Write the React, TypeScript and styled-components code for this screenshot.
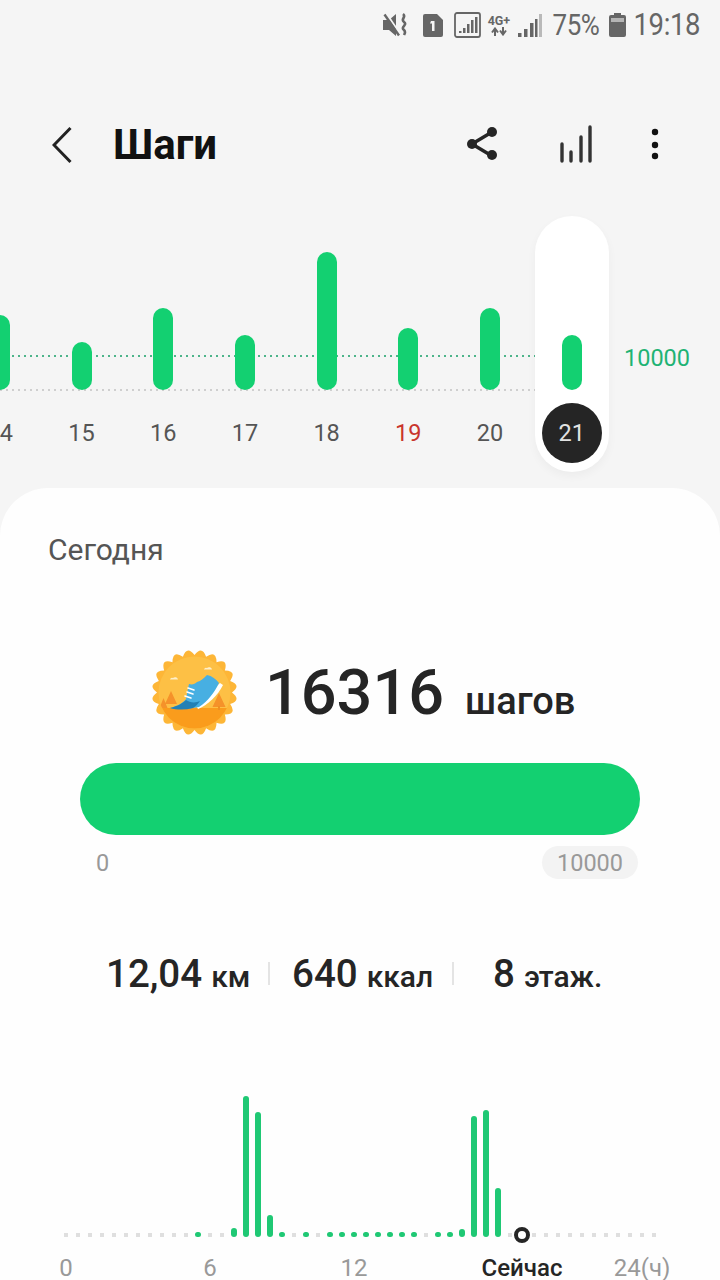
import React from 'react';
import styled, { createGlobalStyle } from 'styled-components';

const GlobalStyle = createGlobalStyle`
  html, body {
    margin: 0;
    padding: 0;
    background: #f5f5f5;
    font-family: Roboto, "Noto Sans", sans-serif;
  }
`;

const Page = styled.div`
  width: 720px;
  height: 1280px;
  overflow: hidden;
  background: #f5f5f5;
`;

const StatusBar = styled.div`
  height: 50px;
  display: flex;
  align-items: center;
  justify-content: flex-end;
  padding-right: 20px;
  color: #666;
  box-sizing: border-box;
`;

const StatusIcon = styled.svg<{ $ml?: number }>`
  display: block;
  margin-left: ${(p) => p.$ml ?? 0}px;
  flex: none;
`;

const StatusText = styled.span<{ $ml: number; $size: number }>`
  margin-left: ${(p) => p.$ml}px;
  font-size: ${(p) => p.$size}px;
  line-height: 30px;
  letter-spacing: -0.4px;
  transform: scaleY(1.12);
`;

const NetworkTag = styled.div`
  margin-left: 5px;
  width: 25px;
  display: flex;
  flex-direction: column;
  align-items: center;
  color: #666;
`;

const NetworkLabel = styled.span`
  font-size: 12.5px;
  line-height: 13px;
  font-weight: 700;
  white-space: nowrap;
`;

const Header = styled.div`
  height: 166px;
  box-sizing: border-box;
  padding: 70px 0 0 52px;
  display: flex;
  align-items: flex-start;
`;

const BackIcon = styled.svg`
  display: block;
  flex: none;
  margin-top: 6px;
`;

const Title = styled.h1`
  margin: 0 0 0 41px;
  font-size: 42px;
  line-height: 50px;
  font-weight: 700;
  color: #111;
  flex: 1;
`;

const HeaderIcon = styled.svg<{ $mr: number }>`
  display: block;
  flex: none;
  margin-right: ${(p) => p.$mr}px;
`;

const WeekChart = styled.div`
  position: relative;
  height: 272px;
`;

const GuideLine = styled.div<{ $top: number; $color: string }>`
  position: absolute;
  left: 0;
  width: 540px;
  top: ${(p) => p.$top}px;
  height: 2px;
  background: repeating-linear-gradient(
    90deg,
    ${(p) => p.$color} 0 2px,
    transparent 2px 6px
  );
`;

const GoalLabel = styled.span`
  position: absolute;
  left: 624px;
  top: 127px;
  font-size: 23.5px;
  line-height: 30px;
  color: #1fb374;
`;

const DayRow = styled.div`
  position: relative;
  display: flex;
  margin-left: -41px;
`;

const DayColumn = styled.div<{ $selected?: boolean }>`
  position: relative;
  width: 81.7px;
  flex: none;
  display: flex;
  flex-direction: column;
  align-items: center;

  ${(p) =>
    p.$selected &&
    `
    &::before {
      content: '';
      position: absolute;
      top: 0;
      left: 3.85px;
      width: 74px;
      height: 256px;
      border-radius: 37px;
      background: #fff;
      box-shadow: 0 4px 10px rgba(0, 0, 0, 0.04);
    }
  `}
`;

const BarSlot = styled.div`
  position: relative;
  height: 174px;
  display: flex;
  align-items: flex-end;
`;

const DayBar = styled.div<{ $height: number }>`
  width: 20px;
  height: ${(p) => p.$height}px;
  border-radius: 10px;
  background: #13d071;
`;

const DayLabel = styled.div<{ $tone?: 'red' | 'selected' }>`
  position: relative;
  margin-top: 13px;
  width: 60px;
  height: 60px;
  border-radius: 50%;
  display: flex;
  align-items: center;
  justify-content: center;
  font-size: 23.5px;
  color: ${(p) => (p.$tone === 'red' ? '#c9352d' : p.$tone === 'selected' ? '#e2e2e2' : '#555')};
  background: ${(p) => (p.$tone === 'selected' ? '#252525' : 'transparent')};
`;

const Card = styled.div`
  height: 792px;
  background: #fefefe;
  border-radius: 48px 48px 0 0;
  padding-top: 47px;
  box-sizing: border-box;
`;

const TodayTitle = styled.div`
  padding-left: 48px;
  font-size: 30px;
  line-height: 30px;
  color: #555;
  font-weight: 400;
`;

const Summary = styled.div`
  margin-top: 85px;
  height: 85px;
  padding-left: 152px;
  display: flex;
  align-items: center;
`;

const Badge = styled.svg`
  display: block;
  flex: none;
`;

const StepsText = styled.div`
  margin-left: 28px;
  display: flex;
  align-items: baseline;
  color: #252525;
  font-weight: 500;
`;

const StepsValue = styled.span`
  font-size: 63px;
  line-height: 70px;
`;

const StepsUnit = styled.span`
  margin-left: 21px;
  font-size: 38px;
`;

const Progress = styled.div`
  margin: 28px 80px 0;
  height: 72px;
  border-radius: 36px;
  background: #13d071;
`;

const RangeRow = styled.div`
  margin-top: 11px;
  height: 33px;
  padding: 0 82px 0 96px;
  display: flex;
  align-items: center;
  justify-content: space-between;
  font-size: 23.5px;
  color: #999;
`;

const GoalPill = styled.span`
  width: 96px;
  height: 33px;
  border-radius: 17px;
  background: #f3f3f3;
  display: flex;
  align-items: center;
  justify-content: center;
`;

const StatsRow = styled.div`
  margin-top: 69px;
  height: 50px;
  padding-left: 106px;
  display: flex;
  align-items: center;
`;

const Stat = styled.div<{ $width: number; $ml?: number }>`
  width: ${(p) => p.$width}px;
  margin-left: ${(p) => p.$ml ?? 0}px;
  display: flex;
  align-items: baseline;
  gap: 9px;
  color: #252525;
  font-weight: 500;
  white-space: nowrap;
`;

const StatValue = styled.span`
  font-size: 38.5px;
`;

const StatUnit = styled.span`
  font-size: 30px;
`;

const StatDivider = styled.div`
  width: 2px;
  height: 23px;
  background: #e4e4e4;
`;

const HourGrid = styled.div`
  margin: 98px 0 0 60px;
  display: grid;
  grid-template-columns: repeat(50, 12px);
  height: 141px;
  align-items: end;
  justify-items: center;
`;

const HourMark = styled.div<{ $height: number; $empty?: boolean }>`
  width: ${(p) => (p.$empty ? 4 : 6)}px;
  height: ${(p) => p.$height}px;
  border-radius: ${(p) => (p.$empty ? 0 : 3)}px;
  background: ${(p) => (p.$empty ? '#dfdfdf' : '#1fc874')};
`;

const NowMarker = styled.div`
  width: 16px;
  height: 16px;
  box-sizing: border-box;
  border: 4px solid #252525;
  border-radius: 50%;
  background: #fff;
  margin-bottom: -6px;
`;

const AxisRow = styled.div`
  margin: 19px 0 0 24px;
  display: grid;
  grid-template-columns: repeat(56, 12px);
`;

const AxisLabel = styled.span<{ $slot: number; $strong?: boolean }>`
  grid-column: ${(p) => p.$slot + 1} / span 7;
  grid-row: 1;
  text-align: center;
  white-space: nowrap;
  font-size: 24px;
  line-height: 24px;
  font-weight: ${(p) => (p.$strong ? 500 : 400)};
  color: ${(p) => (p.$strong ? '#252525' : '#999')};
`;

const days = [
  { day: '14', height: 75 },
  { day: '15', height: 48 },
  { day: '16', height: 82 },
  { day: '17', height: 55 },
  { day: '18', height: 138 },
  { day: '19', height: 62, tone: 'red' as const },
  { day: '20', height: 82 },
  { day: '21', height: 55, tone: 'selected' as const },
];

const hourBars: Record<number, number> = { 14: 9, 15: 141, 16: 125, 17: 22, 33: 8, 34: 121, 35: 127, 36: 49 };
const hourDots = [11, 18, 20, 22, 23, 24, 25, 26, 27, 28, 29, 31, 32];
const NOW_SLOT = 38;

// scalloped edge of the badge
const badgeEdge = () => {
  const count = 20;
  const c = 42.5;
  const inner = 37.5;
  const outer = 48;
  let d = '';
  for (let i = 0; i < count; i++) {
    const a0 = (i / count) * Math.PI * 2;
    const a1 = ((i + 0.5) / count) * Math.PI * 2;
    const a2 = ((i + 1) / count) * Math.PI * 2;
    if (i === 0) d += `M${c + inner * Math.cos(a0)} ${c + inner * Math.sin(a0)}`;
    d += `Q${c + outer * Math.cos(a1)} ${c + outer * Math.sin(a1)} ${c + inner * Math.cos(a2)} ${c + inner * Math.sin(a2)}`;
  }
  return d + 'Z';
};

const StepsBadge = () => (
  <Badge width="85" height="85" viewBox="0 0 85 85">
    <defs>
      <clipPath id="badge-inner">
        <circle cx="42.5" cy="42.5" r="36" />
      </clipPath>
    </defs>
    <path d={badgeEdge()} fill="#fdb637" />
    <circle cx="42.5" cy="42.5" r="36" fill="#fdc045" />
    <g clipPath="url(#badge-inner)">
      <rect x="0" y="58" width="85" height="30" fill="#fa9c1c" />
      <path d="M19 41l-6 13h12zM11.500 48l-4 10h8zM67 43l-6.500 14h13z" fill="#f5922a" />
      <rect x="66" y="56" width="2" height="4" fill="#ef8f22" />
    </g>
    <path d="M18 29.500a2 2 0 0 1 3-1.500a3 3 0 0 1 5 1.500zM52 19.500a2 2 0 0 1 3-1.500a3 3 0 0 1 5 1.500z" fill="#feeec8" />
    <path d="M46 59c10-4 20-14 25-24l-3-2-24 22z" fill="#fff" />
    <path d="M18 58c8-2 13-5 16-9 1-5 2-11 3-15 3 1 6 0 8-2 4-1 7-4 10-7 5 1 9 4 12 8-5 10-11 18-20 24-10 2-20 3-29 1z" fill="#47afe2" />
    <path d="M18 58c8-2 13-5 16-8 4 3 10 3 14 1-2 3-4 5-7 7-8 2-16 2-23 0z" fill="#2380b4" />
    <path d="M36 38l6 2M35 42l6 2M33 46l6 2" stroke="#fff" strokeWidth="1.600" strokeLinecap="round" />
  </Badge>
);

export default function App() {
  return (
    <Page>
      <GlobalStyle />
      <StatusBar>
        <StatusIcon width="26" height="24" viewBox="0 0 26 24">
          <path d="M0 7h6l7-6v22l-7-6H0z" fill="#666" />
          <path d="M3 0l15 22" stroke="#f5f5f5" strokeWidth="2" />
          <path d="M1.500 1.500l14.500 21" stroke="#666" strokeWidth="2.400" />
          <path d="M20 1c4 3-3 5 1 8s-4 5 0 8c2 2 1 3 0 5" fill="none" stroke="#666" strokeWidth="2.600" />
        </StatusIcon>
        <StatusIcon $ml={13} width="21" height="23" viewBox="0 0 21 23">
          <path d="M3 0h12l6 6v15a2 2 0 0 1-2 2H3a2 2 0 0 1-2-2V2a2 2 0 0 1 2-2z" fill="#666" />
          <path d="M9 7h3.500v10H10V9.500H8z" fill="#f5f5f5" />
        </StatusIcon>
        <StatusIcon $ml={11} width="27" height="26" viewBox="0 0 27 26">
          <rect x="1" y="1" width="25" height="24" rx="2" fill="none" stroke="#666" strokeWidth="1.800" />
          <path d="M5 19h2.500v2H5zM9 16h2.500v5H9zM13 12h2.500v9H13zM17 8h2.500v13H17zM21 5h2.500v16H21z" fill="#666" />
        </StatusIcon>
        <NetworkTag>
          <NetworkLabel>4G+</NetworkLabel>
          <StatusIcon width="16" height="9" viewBox="0 0 16 9">
            <path d="M4 9V3M1 5.500L4 1.500l3 4M12 0v6M9 3.500L12 7.500l3-4" fill="none" stroke="#666" strokeWidth="2" />
          </StatusIcon>
        </NetworkTag>
        <StatusIcon $ml={7} width="24" height="23" viewBox="0 0 24 23">
          <path d="M0 19h3.500v4H0zM6 15h3.500v8H6zM12 9h3.500v14H12zM17 5h2.500v18H17z" fill="#666" />
          <path d="M21 0h3v23h-3z" fill="#b9b9b9" />
        </StatusIcon>
        <StatusText $ml={10} $size={26}>75%</StatusText>
        <StatusIcon $ml={9} width="17" height="24" viewBox="0 0 17 24">
          <path d="M5 0h7v2h3a2 2 0 0 1 2 2v18a2 2 0 0 1-2 2H2a2 2 0 0 1-2-2V4a2 2 0 0 1 2-2h3z" fill="#666" />
          <path d="M2 5h13v4H2z" fill="#b5b5b5" />
        </StatusIcon>
        <StatusText $ml={8} $size={27.5}>19:18</StatusText>
      </StatusBar>

      <Header>
        <BackIcon width="20" height="38" viewBox="0 0 20 38">
          <path d="M18.500 2L2 19l16.500 17" fill="none" stroke="#222" strokeWidth="3" />
        </BackIcon>
        <Title>Шаги</Title>
        <HeaderIcon $mr={61} width="30" height="50" viewBox="0 0 30 50">
          <path d="M25 12L5 24l20 12" fill="none" stroke="#252525" strokeWidth="3.500" />
          <circle cx="25" cy="12" r="5" fill="#252525" />
          <circle cx="5" cy="24" r="5" fill="#252525" />
          <circle cx="25" cy="35" r="5" fill="#252525" />
        </HeaderIcon>
        <HeaderIcon $mr={56} width="36" height="50" viewBox="0 0 36 50">
          <path d="M4 24v17M13 32v9M23 17v24M32 7v34" fill="none" stroke="#333" strokeWidth="3.400" strokeLinecap="round" />
        </HeaderIcon>
        <HeaderIcon $mr={60} width="10" height="50" viewBox="0 0 10 50">
          <circle cx="5" cy="12" r="3.200" fill="#111" />
          <circle cx="5" cy="25" r="3.200" fill="#111" />
          <circle cx="5" cy="36" r="3.200" fill="#111" />
        </HeaderIcon>
      </Header>

      <WeekChart>
        <GuideLine $top={139} $color="#4db48a" />
        <GuideLine $top={173} $color="#cfcfcf" />
        <DayRow>
          {days.map((d) => (
            <DayColumn key={d.day} $selected={d.tone === 'selected'}>
              <BarSlot>
                <DayBar $height={d.height} />
              </BarSlot>
              <DayLabel $tone={d.tone}>{d.day}</DayLabel>
            </DayColumn>
          ))}
        </DayRow>
        <GoalLabel>10000</GoalLabel>
      </WeekChart>

      <Card>
        <TodayTitle>Сегодня</TodayTitle>
        <Summary>
          <StepsBadge />
          <StepsText>
            <StepsValue>16316</StepsValue>
            <StepsUnit>шагов</StepsUnit>
          </StepsText>
        </Summary>
        <Progress />
        <RangeRow>
          <span>0</span>
          <GoalPill>10000</GoalPill>
        </RangeRow>
        <StatsRow>
          <Stat $width={162}>
            <StatValue>12,04</StatValue>
            <StatUnit>км</StatUnit>
          </Stat>
          <StatDivider />
          <Stat $width={160} $ml={22}>
            <StatValue>640</StatValue>
            <StatUnit>ккал</StatUnit>
          </Stat>
          <StatDivider />
          <Stat $width={110} $ml={39}>
            <StatValue>8</StatValue>
            <StatUnit>этаж.</StatUnit>
          </Stat>
        </StatsRow>
        <HourGrid>
          {Array.from({ length: 50 }, (_, i) => {
            if (i === NOW_SLOT) return <NowMarker key={i} />;
            if (hourBars[i]) return <HourMark key={i} $height={hourBars[i]} />;
            if (hourDots.includes(i)) return <HourMark key={i} $height={5} />;
            return <HourMark key={i} $height={4} $empty />;
          })}
        </HourGrid>
        <AxisRow>
          <AxisLabel $slot={0}>0</AxisLabel>
          <AxisLabel $slot={12}>6</AxisLabel>
          <AxisLabel $slot={24}>12</AxisLabel>
          <AxisLabel $slot={38} $strong>Сейчас</AxisLabel>
          <AxisLabel $slot={48}>24(ч)</AxisLabel>
        </AxisRow>
      </Card>
    </Page>
  );
}
